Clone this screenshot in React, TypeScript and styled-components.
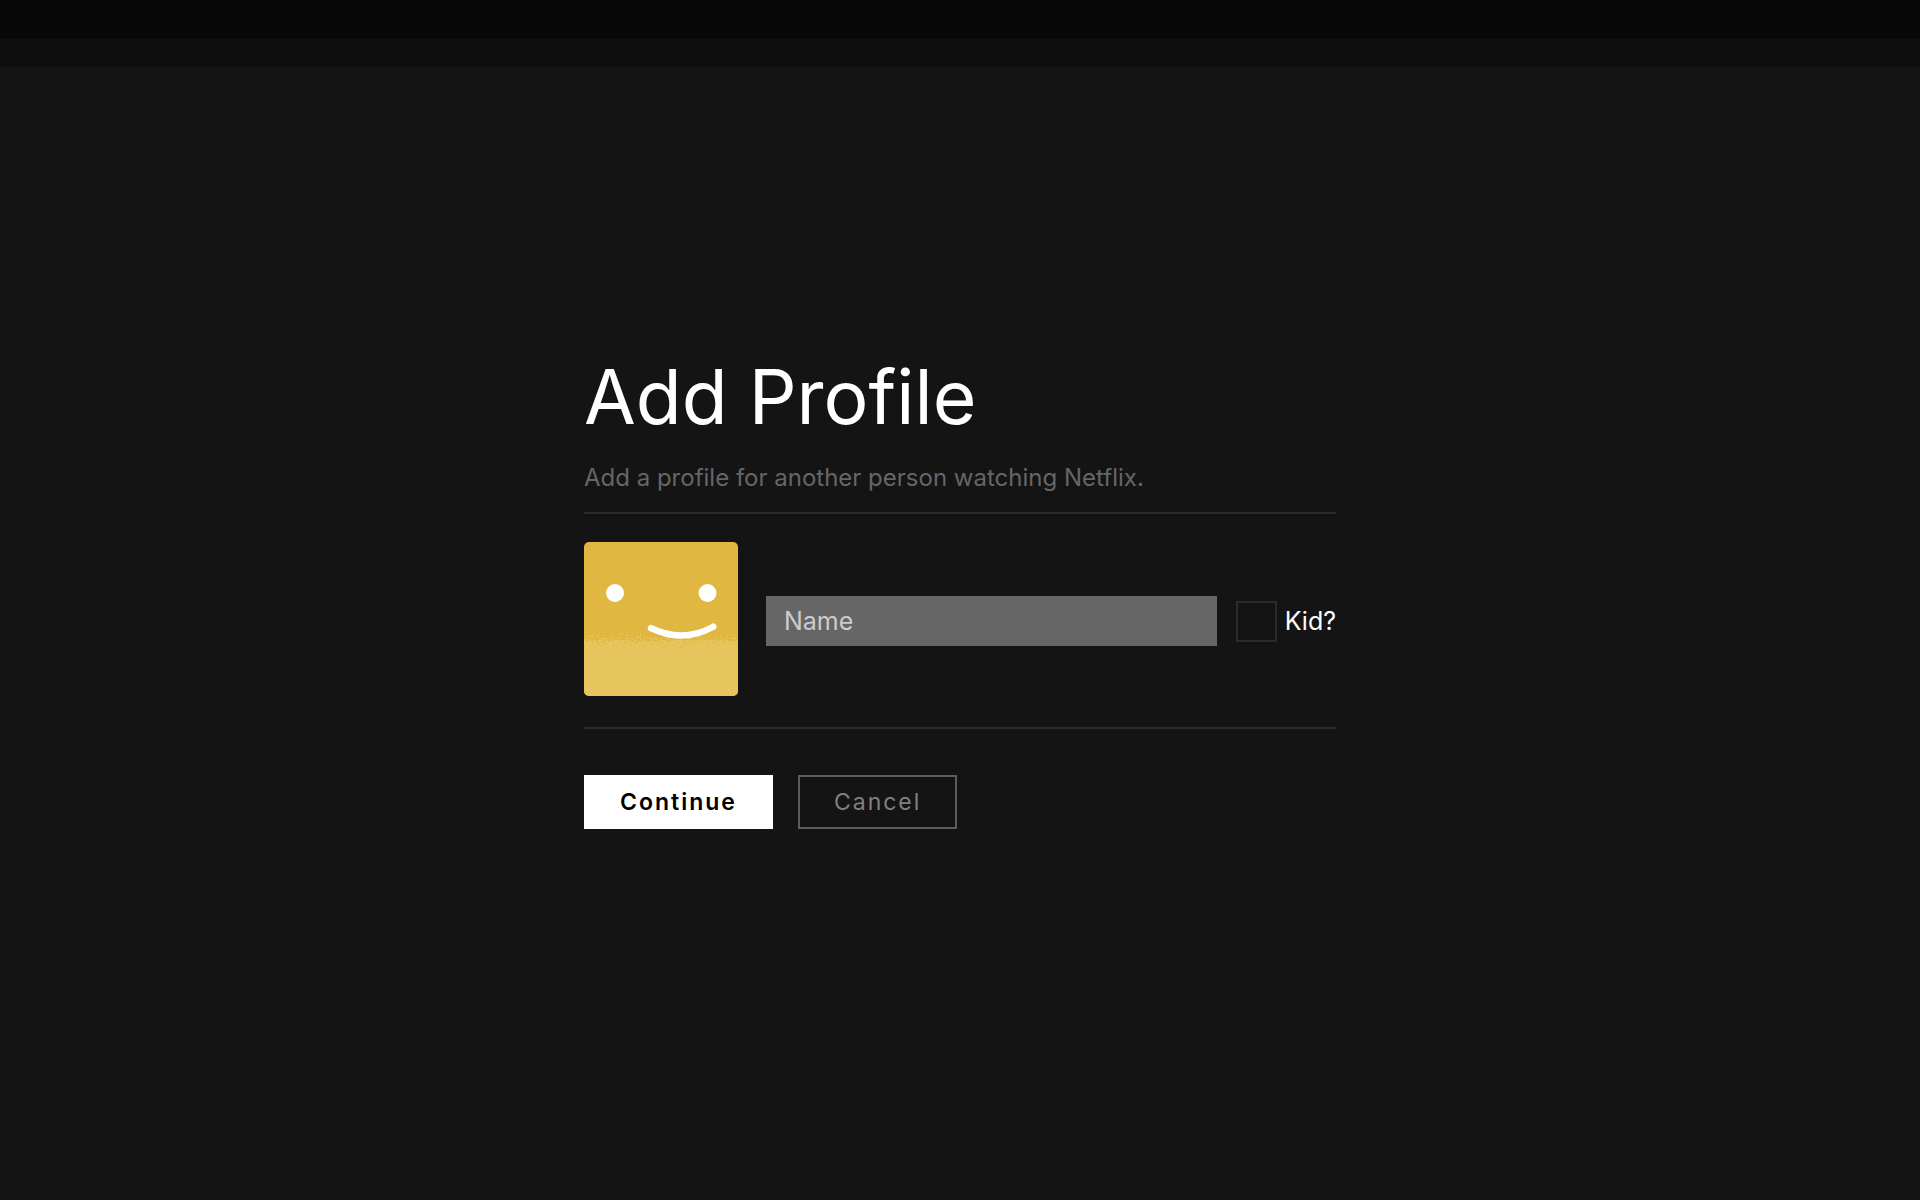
import React, { useState } from "react";
import styled, { createGlobalStyle } from "styled-components";

const GlobalStyle = createGlobalStyle`
  *, *::before, *::after { box-sizing: border-box; }
  body {
    margin: 0;
    background: #141414;
    color: #fff;
    font-family: Inter, "Liberation Sans", Arial, sans-serif;
  }
`;

const Page = styled.div`
  display: flex;
  flex-direction: column;
  min-height: 100vh;
`;

const Header = styled.header`
  height: 67px;
  background: #0f0f0f;
  border-top: 39px solid #080808;
`;

const Main = styled.main`
  flex: 1;
  display: flex;
  align-items: center;
  justify-content: center;
  padding: 0 24px 85px;
`;

const ProfileForm = styled.form`
  width: 100%;
  max-width: 752px;
`;

const Title = styled.h1`
  margin: 0;
  font-size: 75px;
  font-weight: 400;
  line-height: 88px;
`;

const Subtitle = styled.p`
  margin: 21px 0 18px;
  color: #666;
  font-size: 24px;
  line-height: 32px;
`;

const ProfileEntry = styled.section`
  display: flex;
  align-items: center;
  gap: 28px;
  padding: 28px 0 31px;
  border: solid #2b2b2b;
  border-width: 2px 0;
`;

const Avatar = styled.svg`
  flex: none;
  width: 154px;
  height: 154px;
  border-radius: 5px;
`;

const Fields = styled.div`
  flex: 1;
  display: flex;
  align-items: center;
  gap: 19px;
  min-width: 0;
  padding-top: 4px;
`;

const NameInput = styled.input`
  flex: 1;
  min-width: 0;
  height: 50px;
  padding: 0 18px;
  border: 0;
  border-radius: 0;
  background: #666;
  color: #fff;
  font: inherit;
  font-size: 25px;
  &::placeholder { color: #ccc; opacity: 1; }
`;

const KidLabel = styled.label`
  display: flex;
  align-items: center;
  gap: 8px;
  font-size: 25px;
  line-height: 32px;
`;

const KidCheckbox = styled.input`
  appearance: none;
  width: 41px;
  height: 41px;
  margin: 0;
  border: 2px solid #2b2b2b;
  background: transparent;
  &:checked { background: #fff; box-shadow: inset 0 0 0 8px #141414; }
`;

const Actions = styled.div`
  display: flex;
  gap: 25px;
  margin-top: 46px;
`;

const Button = styled.button<{ $primary?: boolean }>`
  height: 54px;
  padding: 0 34px;
  border: 2px solid ${(p) => (p.$primary ? "#fff" : "#5c5c5c")};
  background: ${(p) => (p.$primary ? "#fff" : "transparent")};
  color: ${(p) => (p.$primary ? "#000" : "#808080")};
  font: inherit;
  font-size: 23px;
  font-weight: ${(p) => (p.$primary ? 600 : 400)};
  letter-spacing: 2px;
  cursor: pointer;
`;

export default function App() {
  const [name, setName] = useState("");
  const [kid, setKid] = useState(false);

  return (
    <Page>
      <GlobalStyle />
      <Header />
      <Main>
        <ProfileForm onSubmit={(e) => e.preventDefault()}>
          <Title>Add Profile</Title>
          <Subtitle>Add a profile for another person watching Netflix.</Subtitle>
          <ProfileEntry>
            <Avatar viewBox="0 0 154 154" aria-hidden="true">
              <defs>
                <filter id="grain" x="-10%" y="-20%" width="120%" height="140%">
                  <feTurbulence type="fractalNoise" baseFrequency="0.5" numOctaves="2" seed="4" />
                  <feDisplacementMap in="SourceGraphic" scale="28" xChannelSelector="R" yChannelSelector="G" />
                </filter>
              </defs>
              <rect width="154" height="154" fill="#e0b740" />
              <rect x="-20" y="98" width="194" height="80" fill="#e5c55c" filter="url(#grain)" />
              <circle cx="31" cy="51" r="9" fill="#fff" />
              <circle cx="123.5" cy="51" r="9" fill="#fff" />
              <path d="M67 86.2Q98.5 101.5 129.3 84.7" fill="none" stroke="#fff" strokeWidth="6.4" strokeLinecap="round" />
            </Avatar>
            <Fields>
              <NameInput
                type="text"
                aria-label="Name"
                placeholder="Name"
                value={name}
                onChange={(e) => setName(e.target.value)}
              />
              <KidLabel>
                <KidCheckbox type="checkbox" checked={kid} onChange={(e) => setKid(e.target.checked)} />
                Kid?
              </KidLabel>
            </Fields>
          </ProfileEntry>
          <Actions>
            <Button type="submit" $primary>Continue</Button>
            <Button type="button">Cancel</Button>
          </Actions>
        </ProfileForm>
      </Main>
    </Page>
  );
}
